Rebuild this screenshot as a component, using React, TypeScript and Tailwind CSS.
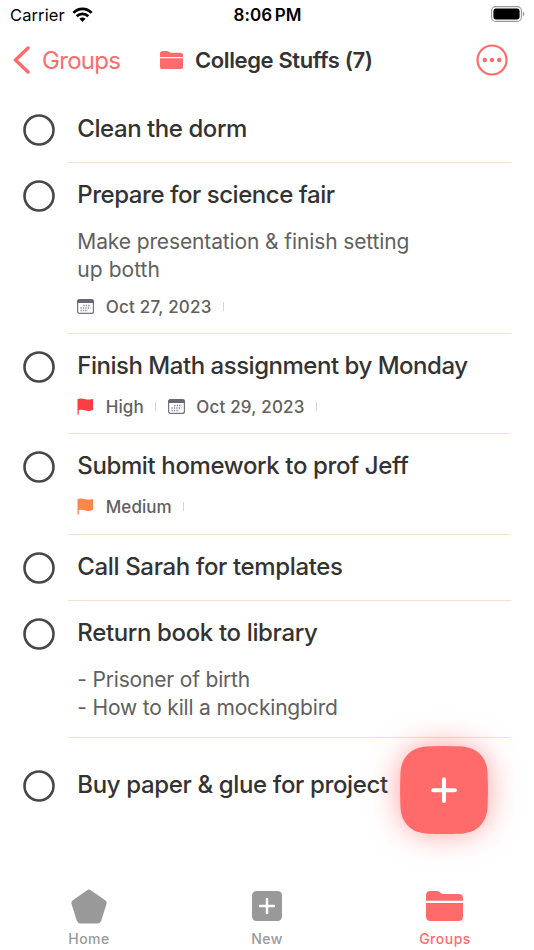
import clsx from 'clsx';

type Task = {
  title: string;
  titleClass: string;
  rowClass: string;
  note?: { text: string; className: string }[];
  priority?: 'High' | 'Medium';
  date?: string;
};

const tasks: Task[] = [
  { title: 'Clean the dorm', titleClass: 'tracking-[-0.44px]', rowClass: 'h-[66.5px]' },
  {
    title: 'Prepare for science fair',
    titleClass: 'tracking-[-0.46px]',
    rowClass: 'h-[171px]',
    note: [
      { text: 'Make presentation & finish setting', className: 'tracking-[-0.12px]' },
      { text: 'up botth', className: 'tracking-[0.05px]' },
    ],
    date: 'Oct 27, 2023',
  },
  {
    title: 'Finish Math assignment by Monday',
    titleClass: 'tracking-[-0.48px]',
    rowClass: 'h-[100px]',
    priority: 'High',
    date: 'Oct 29, 2023',
  },
  {
    title: 'Submit homework to prof Jeff',
    titleClass: 'tracking-[-0.38px]',
    rowClass: 'h-[100.5px]',
    priority: 'Medium',
  },
  { title: 'Call Sarah for templates', titleClass: 'tracking-[-0.36px]', rowClass: 'h-[66.5px]' },
  {
    title: 'Return book to library',
    titleClass: 'tracking-[-0.36px]',
    rowClass: 'h-[137px]',
    note: [
      { text: '- Prisoner of birth', className: 'tracking-[-0.18px]' },
      { text: '- How to kill a mockingbird', className: 'tracking-[-0.18px]' },
    ],
  },
  { title: 'Buy paper & glue for project', titleClass: 'tracking-[-0.36px]', rowClass: 'h-[66px] mt-[14.5px]' },
];

function Folder({ className }: { className: string }) {
  return (
    <svg viewBox="0 0 37 30" preserveAspectRatio="none" fill="currentColor" className={className}>
      <path d="M0 9.8V4.4Q0 0 4.4 0h6.2q1.8 0 3 1l1.4 1.2q1 .7 2.6.7h15q4.4 0 4.4 4.4v2.5z" />
      <path d="M0 11.9h37v13.7q0 4.4-4.4 4.4H4.4Q0 30 0 25.6z" />
    </svg>
  );
}

function Calendar() {
  return (
    <svg viewBox="0 0 17 15" className="w-[17px] h-[15px] shrink-0" fill="none">
      <rect x=".6" y=".6" width="15.8" height="13.8" rx="2" stroke="#77727f" strokeWidth="1.2" />
      <path d="M.2 4V2.4Q.2.2 2.4.2h12.2q2.2 0 2.2 2.2V4z" fill="#6a6473" />
      <path
        d="M6.3 6.5h7.500M3.500 9h10M3.500 11.500h7.500"
        stroke="#8a8592"
        strokeWidth="1.3"
        strokeDasharray="1.3 1.1"
      />
    </svg>
  );
}

function Flag({ className }: { className: string }) {
  return (
    <svg viewBox="0 0 17 17" fill="currentColor" className={clsx('w-[17px] h-[17px] shrink-0', className)}>
      <path d="M.5 1.3Q1.8.4 4 .4c3 0 4.5 1.2 7.4 1.2 1.8 0 2.8-.5 3.8-.7q.9-.1.9.8v9.5q0 .7-.7 1-1.5.7-3.8.7C8.4 12.900 7 11.700 4 11.700q-1.400 0-2.200.3V16q0 .7-.7.7T.5 16z" />
    </svg>
  );
}

function Tick() {
  return <span className="w-px h-[9px] bg-[#d5d5d8]" />;
}

function TaskRow({ task, last }: { task: Task; last: boolean }) {
  return (
    <li className={clsx('flex pl-[22.5px] pr-[23px]', task.rowClass)}>
      <svg viewBox="0 0 32 32" className="mt-[17px] w-8 h-8 shrink-0" fill="none">
        <circle cx="16" cy="16" r="14.5" stroke="#474747" strokeWidth="2.6" />
      </svg>
      <div className={clsx('ml-[13.5px] pl-[9.3px] pt-[18px] flex-1 border-[#f5e2cd]', !last && 'border-b')}>
        <h2 className={clsx('text-[24px] leading-[28px] font-medium text-[#333] whitespace-nowrap', task.titleClass)}>
          {task.title}
        </h2>
        {task.note && (
          <div className="mt-[18.5px] text-[21px] leading-[28.5px] text-[#606060] whitespace-nowrap">
            {task.note.map((line) => (
              <p key={line.text}>
                <span className={line.className}>{line.text}</span>
              </p>
            ))}
          </div>
        )}
        {(task.priority || task.date) && (
          <div
            className={clsx(
              'flex items-center h-5 gap-[11.5px] text-[17px] leading-5 font-medium text-[#606060] whitespace-nowrap',
              task.note ? 'mt-[11.5px]' : 'mt-4',
            )}
          >
            {task.priority && (
              <>
                <Flag className={task.priority === 'High' ? 'text-[#fa3e44]' : 'text-[#fd8649]'} />
                <span className="pt-px tracking-[0.05px]">{task.priority}</span>
                <Tick />
              </>
            )}
            {task.date && (
              <>
                <Calendar />
                <span className="pt-px tracking-[0.2px]">{task.date}</span>
                <Tick />
              </>
            )}
          </div>
        )}
      </div>
    </li>
  );
}

function StatusBar() {
  return (
    <div className="h-[30px] pl-[10px] pr-[9px] grid grid-cols-[1fr_auto_1fr] items-center text-black">
      <div className="flex items-center gap-[7px]">
        <span className="text-[16.5px] tracking-[0.1px]">Carrier</span>
        <svg viewBox="0 0 22 16" className="w-[21px] h-[15px] -mt-px" fill="none" stroke="#000" strokeWidth="2.9">
          <path d="M1.3 6.3C6.8.7 15.2.7 20.7 6.3" />
          <path d="M4.8 9.8c3.6-3.4 8.8-3.4 12.4 0" />
          <path d="M7.7 12.6c2-1.7 4.6-1.7 6.6 0L11 16z" fill="#000" stroke="none" />
        </svg>
      </div>
      <span className="pt-px text-[17px] font-semibold [word-spacing:-2px] tracking-[0.1px]">8:06 PM</span>
      <svg viewBox="0 0 34 16" className="w-[34px] h-4 justify-self-end -mt-[2px]" fill="none">
        <rect x=".6" y=".6" width="29.8" height="14.8" rx="4" stroke="#999" strokeWidth="1.1" />
        <rect x="2.4" y="2.6" width="26.2" height="10.8" rx="2.4" fill="#000" />
        <path d="M31.8 5.8q1.6.6 1.6 2.2t-1.6 2.2z" fill="#999" />
      </svg>
    </div>
  );
}

function Header() {
  return (
    <header className="h-[61px] flex items-center pl-[13px] pr-[26px] text-[#ff6b6b]">
      <svg viewBox="0 0 17 28" className="w-[17px] h-7 -mt-px" fill="none" stroke="currentColor" strokeWidth="3.4">
        <path d="M15 2 2.4 14 15 26" strokeLinecap="round" strokeLinejoin="round" />
      </svg>
      <span className="ml-3 w-[79px] text-[24px] tracking-[-0.7px]">Groups</span>
      <Folder className="ml-[39px] w-[23px] h-[18.5px] -mt-px" />
      <h1 className="ml-3 text-[22px] font-semibold text-[#333] whitespace-nowrap tracking-[-0.38px]">
        College Stuffs (7)
      </h1>
      <svg viewBox="0 0 32 32" className="ml-auto w-8 h-8 -mt-[2px]" fill="currentColor">
        <circle cx="16" cy="16" r="14.5" fill="none" stroke="currentColor" strokeWidth="2.2" />
        <circle cx="8.8" cy="16" r="2.2" />
        <circle cx="16" cy="16" r="2.2" />
        <circle cx="23.2" cy="16" r="2.2" />
      </svg>
    </header>
  );
}

function TabBar() {
  return (
    <nav className="grid grid-cols-3 h-[70px] text-[14px] font-medium tracking-[0.5px] text-[#999]">
      <div className="flex flex-col items-center">
        <svg viewBox="0 0 36 36" className="mt-[9px] w-9 h-9" fill="currentColor">
          <path d="M15.8 1.4q2.2-1.6 4.4 0l14 9.9q2 1.5 1.2 4l-5.2 16.5q-.9 2.7-3.7 2.7H9.5q-2.8 0-3.7-2.7L.6 15.3q-.8-2.5 1.2-4z" />
        </svg>
        <span className="mt-[4px] leading-5">Home</span>
      </div>
      <div className="flex flex-col items-center">
        <svg viewBox="0 0 30 30" className="mt-[11px] w-[30px] h-[30px]">
          <rect width="30" height="30" rx="4.5" fill="currentColor" />
          <path d="M15 8v14M8 15h14" stroke="#fff" strokeWidth="2.4" strokeLinecap="round" />
        </svg>
        <span className="mt-[8px] leading-5">New</span>
      </div>
      <div className="flex flex-col items-center text-[#ff6b6b]">
        <Folder className="mt-[11px] w-[37px] h-[30px] -ml-px" />
        <span className="mt-[8px] leading-5">Groups</span>
      </div>
    </nav>
  );
}

export default function App() {
  return (
    <div className="relative w-[534px] h-[950px] flex flex-col overflow-hidden bg-white font-['Inter',sans-serif]">
      <StatusBar />
      <Header />
      <ul className="flex-1 pt-[5.5px]">
        {tasks.map((task, i) => (
          <TaskRow key={task.title} task={task} last={i === tasks.length - 1} />
        ))}
      </ul>
      <TabBar />

      {/* Floating add button */}
      <button className="absolute left-[400px] top-[746px] w-[88px] h-[88px] rounded-[30px] shadow-[0_0_30px_rgba(255,107,107,0.65)]">
        <svg viewBox="0 0 88 88" className="w-[88px] h-[88px]">
          <path
            d="M28 .3Q44-.2 60 .3C77 1 87 11 87.7 28q.5 16 0 32C87 77 77 87 60 87.7q-16 .5-32 0C11 87 1 77 .3 60q-.5-16 0-32C1 11 11 1 28 .3z"
            fill="#ff6b6b"
          />
          <path d="M44 33.3v21.8M33.1 44.2h21.8" stroke="#fff" strokeWidth="4" strokeLinecap="round" />
        </svg>
      </button>
    </div>
  );
}
